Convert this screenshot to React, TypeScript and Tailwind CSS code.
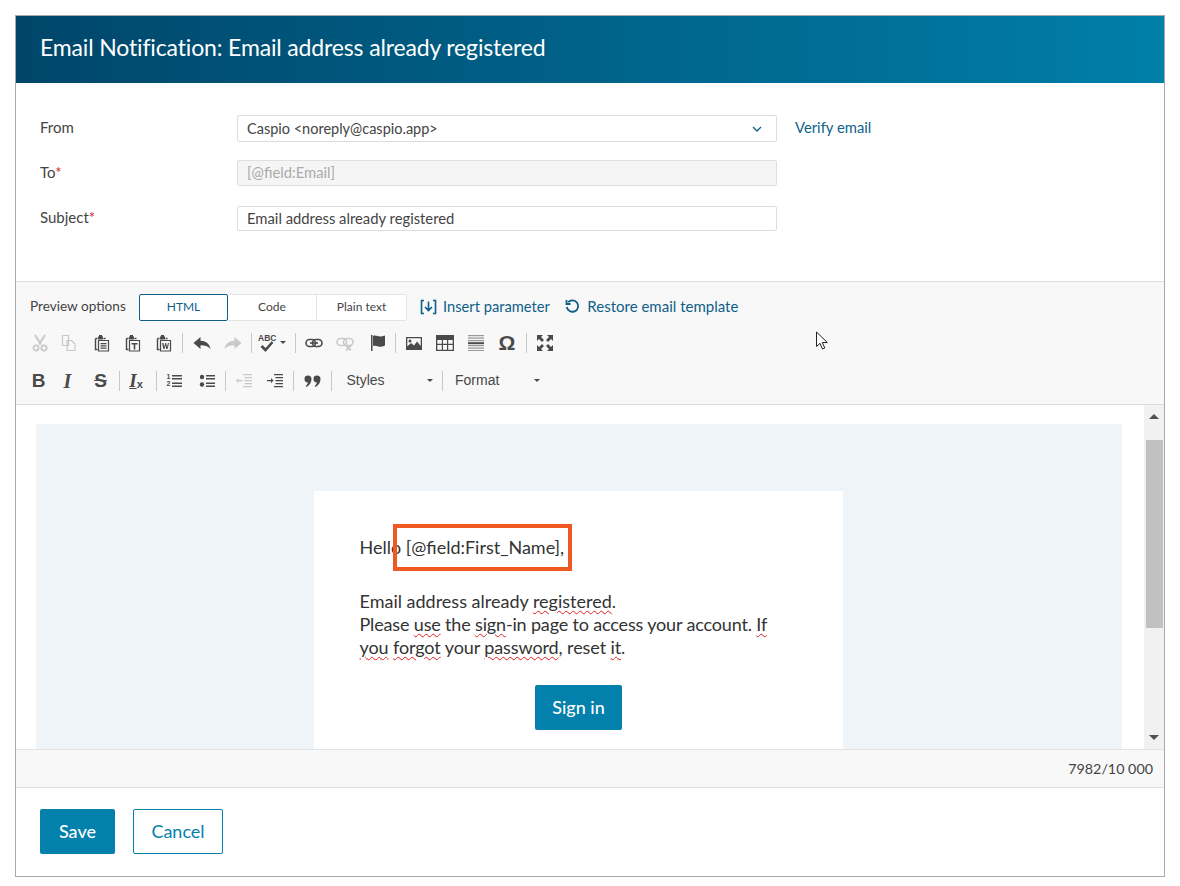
import type { ReactNode } from "react";

const Btn = ({ children, off }: { children: ReactNode; off?: boolean }) => (
  <span className={`flex h-[26px] w-[31px] shrink-0 items-center justify-center ${off ? "text-[#c9c9c9]" : "text-[#4a4a4a]"}`}>
    {children}
  </span>
);

const Sep = ({ wide }: { wide?: boolean }) => (
  <span className={`flex shrink-0 justify-center ${wide ? "w-[7px]" : "w-[6.5px]"}`}>
    <span className="h-5 w-px bg-[#c8c8c8]" />
  </span>
);

const Caret = () => <span className="h-0 w-0 border-x-[3px] border-t-[3px] border-x-transparent border-t-[#4a4a4a]" />;

const Ico = ({ children, w = 16, h = 16 }: { children: ReactNode; w?: number; h?: number }) => (
  <svg width={w} height={h} viewBox={`0 0 ${w} ${h}`} fill="currentColor">
    {children}
  </svg>
);

const Clipboard = ({ children }: { children?: ReactNode }) => (
  <Ico w={16} h={18}>
    <path d="M1.500 4.500h2M9.500 4.500h2M1.500 4.500v11h2" fill="none" stroke="currentColor" strokeWidth="1.400" />
    <path d="M4 2.500h5v3H4z" />
    <path d="M5 1h3v2H5z" />
    <path d="M4.500 6.500h10v10.500h-10z" fill="none" stroke="currentColor" strokeWidth="1.200" />
    {children}
  </Ico>
);

const Row1 = () => (
  <div className="flex h-[37px] items-center pl-[8px]">
    <Btn off>
      <Ico w={16} h={18}>
        <path d="M3 1l6 9.500M13 1L7 10.500" fill="none" stroke="currentColor" strokeWidth="2" />
        <circle cx="4" cy="14" r="2.600" fill="none" stroke="currentColor" strokeWidth="1.800" />
        <circle cx="12" cy="14" r="2.600" fill="none" stroke="currentColor" strokeWidth="1.800" />
      </Ico>
    </Btn>
    <Btn off>
      <span className="-ml-1 flex">
        <Ico w={16} h={18}>
          <path d="M1.500 1.500h6v10h-6zM6 6.500h4.500l3.500 3.500v6.500H6z" fill="none" stroke="currentColor" strokeWidth="1.200" />
        </Ico>
      </span>
    </Btn>
    <Btn>
      <Clipboard>
        <path d="M6.500 9h6v1.200h-6zM6.500 11.300h6v1.200h-6zM6.500 13.600h6v1.200h-6z" />
      </Clipboard>
    </Btn>
    <Btn>
      <Clipboard>
        <path d="M6.500 9h6v1.500h-2.200v5H8.700v-5H6.500z" />
      </Clipboard>
    </Btn>
    <Btn>
      <Clipboard>
        <path d="M6 9h1.400l.9 4 .9-4h.9l.9 4 .9-4H13l-1.400 6h-1.200l-.9-3.600-.9 3.600H7.400z" />
      </Clipboard>
    </Btn>
    <Sep wide />
    <Btn>
      <Ico w={18} h={16}>
        <path d="M0.500 8L7.500 2v3.800c5 0 9 2.700 10 8.200-2.400-3-5.500-3.800-10-3.800V14z" />
      </Ico>
    </Btn>
    <Btn off>
      <Ico w={18} h={16}>
        <path d="M17.500 8L10.500 2v3.800c-5 0-9 2.700-10 8.200 2.400-3 5.500-3.800 10-3.800V14z" />
      </Ico>
    </Btn>
    <Sep wide />
    <span className="flex h-[26px] w-[36.500px] shrink-0 items-center pl-[3px] text-[#4a4a4a]">
      <span className="relative block h-[18px] w-[18px]">
        <span className="absolute left-0 top-[-1px] font-['Liberation_Sans',sans-serif] text-[8.500px] font-bold leading-[10px]">ABC</span>
        <svg className="absolute left-[2px] top-[7px]" width="14" height="11" viewBox="0 0 14 11" fill="none" stroke="currentColor" strokeWidth="2.600">
          <path d="M1.500 5l4 4 7-8" />
        </svg>
      </span>
      <span className="ml-[4px] flex">
        <Caret />
      </span>
    </span>
    <Sep wide />
    <Btn>
      <Ico w={18} h={16}>
        <rect x="1" y="4.500" width="9.500" height="7" rx="3.500" fill="none" stroke="currentColor" strokeWidth="1.600" />
        <rect x="7.500" y="4.500" width="9.500" height="7" rx="3.500" fill="none" stroke="currentColor" strokeWidth="1.600" />
        <path d="M5 7.200h8v1.600H5z" />
      </Ico>
    </Btn>
    <Btn off>
      <Ico w={18} h={16}>
        <rect x="1" y="3.500" width="9.500" height="7" rx="3.500" fill="none" stroke="currentColor" strokeWidth="1.600" />
        <rect x="7.500" y="3.500" width="9.500" height="7" rx="3.500" fill="none" stroke="currentColor" strokeWidth="1.600" />
        <path d="M10 10.500l5 5M15 10.500l-5 5" stroke="currentColor" strokeWidth="1.800" />
      </Ico>
    </Btn>
    <Btn>
      <span className="ml-1 flex">
        <Ico w={16} h={18}>
          <path d="M1 1h1.500v16H1z" />
          <path d="M3 2c3-1.400 5 1 8 .5 1.500-.2 3-.5 4-1v10c-1 .6-2.500 1-4 1.200-3 .4-5-1.900-8-.6z" />
        </Ico>
      </span>
    </Btn>
    <Sep wide />
    <Btn>
      <Ico w={16} h={14}>
        <path fillRule="evenodd" d="M0 1h16v13H0zM1.300 2.300v8.200l3.700-3.500 3 2.500 3-4 3.700 4.500V2.300zM4 3.500a1.500 1.500 0 1 0 0 3 1.500 1.500 0 0 0 0-3z" />
      </Ico>
    </Btn>
    <Btn>
      <Ico w={18} h={16}>
        <path fillRule="evenodd" d="M0 0h18v16H0zM1.300 5v3.800h4.500V5zm5.700 0v3.800h4V5zm5.200 0v3.800h4.500V5zM1.300 10v4.700h4.500V10zm5.700 0v4.700h4V10zm5.200 0v4.700h4.500V10z" />
      </Ico>
    </Btn>
    <Btn>
      <Ico>
        <path d="M0 0h16v1.300H0zM0 2.500h16v1.300H0zM0 5h16v1.300H0zM0 10h16v1.300H0zM0 12.500h16v1.300H0zM0 15h16v1H0z" opacity="0.55" />
        <path d="M0 7.200h16v2H0z" />
      </Ico>
    </Btn>
    <Btn>
      <span className="font-['Liberation_Sans',sans-serif] text-[21px] font-bold leading-none">Ω</span>
    </Btn>
    <Sep wide />
    <Btn>
      <Ico>
        <path d="M0 0h6L4 2l3 3-2 2-3-3-2 2zM16 0v6l-2-2-3 3-2-2 3-3-2-2zM0 16v-6l2 2 3-3 2 2-3 3 2 2zM16 16h-6l2-2-3-3 2-2 3 3 2-2z" />
      </Ico>
    </Btn>
  </div>
);

const Row2 = () => (
  <div className="flex h-[37px] items-center pl-[7px]">
    <Btn>
      <span className="font-['Liberation_Sans',sans-serif] text-[19px] font-bold leading-none">B</span>
    </Btn>
    <Btn>
      <span className="-ml-1 font-['Liberation_Serif',serif] text-[20px] font-bold italic leading-none">I</span>
    </Btn>
    <Btn>
      <span className="font-['Liberation_Sans',sans-serif] text-[19px] font-bold leading-none line-through">S</span>
    </Btn>
    <Sep />
    <Btn>
      <span className="-ml-1 flex items-end font-['Liberation_Serif',serif] font-bold italic leading-none">
        <span className="text-[19px] underline">I</span>
        <span className="font-['Liberation_Sans',sans-serif] text-[11px] not-italic">x</span>
      </span>
    </Btn>
    <Sep />
    <Btn>
      <span className="-ml-[2px] flex items-center">
        <span className="flex flex-col gap-[1px] font-['Liberation_Sans',sans-serif] text-[7px] font-bold leading-[6px]">
          <span>1</span>
          <span>2</span>
        </span>
        <svg className="ml-[2px]" width="10" height="14" viewBox="0 0 10 14" fill="currentColor">
          <path d="M0 1h10v1.500H0zM0 4h10v1.500H0zM0 8.500h10V10H0zM0 11.500h10V13H0z" />
        </svg>
      </span>
    </Btn>
    <Btn>
      <span className="flex">
        <Ico>
          <circle cx="3" cy="4" r="2.200" />
          <circle cx="3" cy="11.500" r="2.200" />
          <path d="M7 2h9v1.500H7zM7 5h9v1.500H7zM7 9.500h9V11H7zM7 12.500h9V14H7z" />
        </Ico>
      </span>
    </Btn>
    <Sep />
    <Btn off>
      <Ico>
        <path d="M7 1h9v1.200H7zM8.500 4h7.500v1.200H8.500zM8.500 7h7.500v1.200H8.500zM8.500 10h7.500v1.200H8.500zM7 13h9v1.200H7z" />
        <path d="M6.500 7h-4V5L0 7.600l2.500 2.600v-2h4z" />
      </Ico>
    </Btn>
    <Btn>
      <Ico>
        <path d="M7 1h9v1.200H7zM8.500 4h7.500v1.200H8.500zM8.500 7h7.500v1.200H8.500zM8.500 10h7.500v1.200H8.500zM7 13h9v1.200H7z" />
        <path d="M0 7h4V5l2.500 2.600L4 10.200v-2H0z" />
      </Ico>
    </Btn>
    <Sep />
    <Btn>
      <Ico w={17} h={14}>
        <path d="M4 1.500a3.500 3.500 0 0 1 3.500 3.500c0 3.500-2 6.500-5 8l-.8-1.200c1.300-1 2-2.100 2.200-3.400A3.400 3.400 0 0 1 4 1.500zM13 1.500a3.500 3.500 0 0 1 3.500 3.500c0 3.500-2 6.500-5 8l-.8-1.200c1.300-1 2-2.100 2.200-3.400A3.400 3.400 0 0 1 13 1.500z" />
      </Ico>
    </Btn>
    <Sep />
    <span className="flex w-[104.500px] shrink-0 items-center pl-[12px] font-['Liberation_Sans',sans-serif] text-[14px] text-[#484848]">
      <span className="w-[80px]">Styles</span>
      <Caret />
    </span>
    <Sep />
    <span className="flex w-[100px] shrink-0 items-center pl-[9.500px] font-['Liberation_Sans',sans-serif] text-[14px] text-[#484848]">
      <span className="w-[79px]">Format</span>
      <Caret />
    </span>
  </div>
);

const Wavy = ({ children }: { children: ReactNode }) => (
  <span className="underline decoration-[#e02020] decoration-wavy decoration-1 underline-offset-2">{children}</span>
);

export default function App() {
  return (
    <div className="relative h-[886px] w-[1180px] bg-white font-['Lato',sans-serif] text-[#333]">
      <div className="absolute left-[15px] top-[15px] flex h-[862px] w-[1150px] flex-col border border-[#a9a9a9]">
        <div className="flex h-[67px] shrink-0 items-center bg-gradient-to-r from-[#00466a] to-[#007fa9] pb-[5px] pl-6 text-[23px] tracking-[-0.15px] text-white">
          Email Notification: Email address already registered
        </div>

        <div className="h-[198px] shrink-0 px-6 pt-8 text-[15px] text-[#444]">
          <div className="flex h-[27px] items-center">
            <span className="w-[197px] -translate-y-px">From</span>
            <div className="flex h-[27px] w-[540px] items-center justify-between rounded-[2px] border border-[#ddd] pl-[9px] pr-[14px] text-[14.500px] text-[#444]">
              Caspio &lt;noreply@caspio.app&gt;
              <svg width="10" height="6" viewBox="0 0 10 6" fill="none" stroke="#0f5f88" strokeWidth="1.300">
                <path d="M1 1l4 4 4-4" />
              </svg>
            </div>
            <span className="ml-[18px] -translate-y-px text-[14.800px] text-[#0f5f88]">Verify email</span>
          </div>
          <div className="mt-[18px] flex h-[26px] items-center">
            <span className="w-[197px] -translate-y-px">
              To<span className="text-[#d4242c]">*</span>
            </span>
            <div className="flex h-[26px] w-[540px] items-center rounded-[2px] border border-[#e0e0e0] bg-[#f5f5f5] pb-px pl-[9px] text-[14.800px] text-[#aaa]">
              [@field:Email]
            </div>
          </div>
          <div className="mt-5 flex h-[25px] items-center">
            <span className="w-[197px] -translate-y-px">
              Subject<span className="text-[#d4242c]">*</span>
            </span>
            <div className="flex h-[25px] w-[540px] items-center rounded-[2px] border border-[#ddd] pl-[9px] text-[14.800px] text-[#444]">
              Email address already registered
            </div>
          </div>
        </div>

        <div className="h-[124px] shrink-0 border-y border-[#ddd] bg-[#f8f8f8]">
          <div className="flex items-center pl-[14px] pt-3">
            <span className="w-[109px] -translate-y-px text-[13.600px] text-[#444]">Preview options</span>
            <div className="flex h-[27px] text-[12px] text-[#444]">
              <span className="flex w-[89px] items-center justify-center rounded-[2px] border border-[#0f5f88] bg-white pb-[2px] text-[#0f5f88]">HTML</span>
              <span className="flex w-[89px] items-center justify-center border-y border-r border-[#e4e4e4] bg-white pb-[2px]">Code</span>
              <span className="flex w-[90px] items-center justify-center rounded-r-[2px] border-y border-r border-[#e4e4e4] bg-white pb-[2px]">Plain text</span>
            </div>
            <svg className="ml-[13px] -translate-y-px" width="17" height="16" viewBox="0 0 17 16" fill="none" stroke="#0f5f88" strokeWidth="1.600">
              <path d="M4 1.500H1.500v13H4M13 1.500h2.500v13H13M8.500 2.500v9M5 8l3.500 3.500L12 8" />
            </svg>
            <span className="ml-[6px] -translate-y-px text-[14.700px] text-[#0f5f88]">Insert parameter</span>
            <svg className="ml-[15px] -translate-y-px" width="15" height="15" viewBox="0 0 15 15" fill="none" stroke="#0f5f88" strokeWidth="1.800">
              <path d="M3.200 3.200A5.700 5.700 0 1 1 1.800 8" />
              <path d="M1.500 1v4h4" />
            </svg>
            <span className="ml-[7.500px] -translate-y-px text-[15px] text-[#0f5f88]">Restore email template</span>
          </div>
          <div className="mt-[3px]">
            <Row1 />
            <div className="mt-px">
              <Row2 />
            </div>
          </div>
        </div>

        <div className="relative h-[344px] shrink-0 overflow-hidden bg-white">
          <div className="ml-5 mt-[19px] h-[400px] w-[1086px] bg-[#eff4f8] pt-[67px]">
            <div className="ml-[278px] h-[330px] w-[529px] bg-white pl-[45.500px] pt-[45px] text-[18px] leading-[23px] text-[#333]">
              <p>Hello [@field:First_Name],</p>
              <p className="mt-[31px]">
                <span>
                  Email address already <Wavy>registered</Wavy>.
                </span>
                <br />
                <span className="tracking-[-0.16px]">
                  Please <Wavy>use</Wavy> the <Wavy>sign</Wavy>-in page to access your account. <Wavy>If</Wavy>
                </span>
                <br />
                <span className="tracking-[-0.1px]">
                  <Wavy>you</Wavy> <Wavy>forgot</Wavy> your <Wavy>password</Wavy>, reset <Wavy>it</Wavy>.
                </span>
              </p>
              <div className="mt-[26px] flex pl-[175.500px]">
                <span className="flex h-[45px] w-[87px] items-center justify-center rounded-[2px] bg-[#0480ad] font-medium text-white">Sign in</span>
              </div>
            </div>
          </div>
          <div className="absolute bottom-0 right-0 top-0 flex w-5 flex-col items-center bg-[#f1f1f1]">
            <span className="mt-[9px] h-0 w-0 border-x-[5px] border-b-[5px] border-x-transparent border-b-[#505050]" />
            <span className="ml-[1px] mt-[21px] h-[188px] w-[17px] bg-[#c1c1c1]" />
            <span className="mb-[9px] mt-auto h-0 w-0 border-x-[5px] border-t-[5px] border-x-transparent border-t-[#505050]" />
          </div>
        </div>

        <div className="flex h-[39px] shrink-0 items-center justify-end border-y border-[#e2e2e2] bg-[#f8f8f8] pr-[11px] text-[14.300px] text-[#444]">7982/10 000</div>

        <div className="flex flex-1 gap-[18px] pl-6 pt-[21px] text-[18px]">
          <span className="flex h-[45px] w-[75px] items-center justify-center rounded-[2px] bg-[#0480ad] font-medium text-white">Save</span>
          <span className="flex h-[45px] w-[90px] items-center justify-center rounded-[2px] border border-[#0480ad] text-[#0480ad]">Cancel</span>
        </div>
      </div>

      <div className="absolute left-[393px] top-[524px] h-[47px] w-[179px] border-4 border-[#f05a22]" />

      <svg className="absolute left-[815px] top-[331px]" width="15" height="20" viewBox="0 0 15 20" fill="#fff" stroke="#222" strokeWidth="1">
        <path d="M1.500 1v14.500l3.500-3.200 2.500 5.700 2.300-1-2.500-5.500h5z" />
      </svg>
    </div>
  );
}
